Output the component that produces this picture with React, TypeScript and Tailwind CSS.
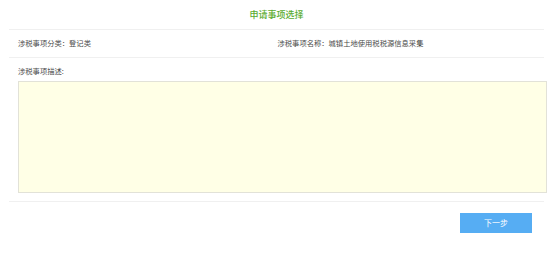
export default function App() {
  const font = { fontFamily: '"Noto Sans CJK SC", "Liberation Sans", sans-serif' };
  return (
    <div className="w-[554px] h-[253px] bg-white" style={font}>
      <div className="ml-[9px] w-[535px]">
        <div className="h-[30px] border-b border-[#f0f0f0] flex items-center justify-center text-[9px] leading-none font-medium text-[#5aac2f]">
          申请事项选择
        </div>
        <div className="h-[28px] border-b border-[#f0f0f0] grid grid-cols-2 items-center text-[7.3px] leading-none text-[#4a4a4a]">
          <div className="pl-[9px]">涉税事项分类：登记类</div>
          <div className="pl-[1px]">涉税事项名称：城镇土地使用税税源信息采集</div>
        </div>
      </div>
      <div className="ml-[18px] mt-[10px] text-[7.3px] leading-none text-[#4a4a4a]">涉税事项描述:</div>
      <textarea className="block ml-[18px] mt-[6px] w-[529px] h-[112px] bg-[#ffffe6] border border-[#e2e2d8] resize-none outline-none" />
      <div className="ml-[9px] mt-[8px] w-[535px] border-b border-[#f0f0f0]" />
      <div className="flex justify-end w-[532px] mt-[11px]">
        <button className="w-[72px] h-[20px] bg-[#56adf3] text-white text-[8px] leading-none">下一步</button>
      </div>
    </div>
  );
}
